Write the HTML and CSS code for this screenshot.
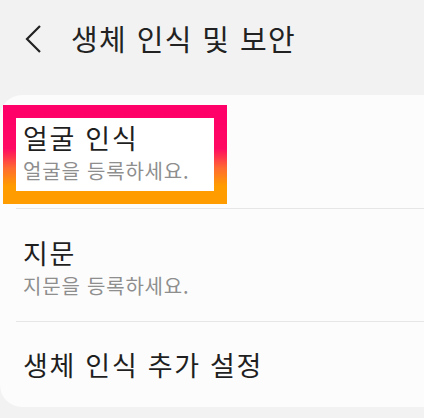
FILE: index.html
```html
<!DOCTYPE html>
<html lang="ko">
<head>
  <meta charset="UTF-8">
  <meta name="viewport" content="width=device-width, initial-scale=1.0">
  <title>생체 인식 및 보안</title>
  <link rel="stylesheet" href="styles.css">
</head>
<body>

<header class="top-bar">
  <svg class="back" width="16" height="28" viewBox="0 0 16 28">
    <path d="M15 1 L2 14 L15 27" fill="none" stroke="#222" stroke-width="2.2"/>
  </svg>
  <h1>생체 인식 및 보안</h1>
</header>

<section class="card">
  <div class="row row-face">
    <div class="highlight">
      <div class="title">얼굴 인식</div>
      <div class="sub">얼굴을 등록하세요.</div>
    </div>
  </div>

  <div class="row row-finger">
    <div class="title">지문</div>
    <div class="sub">지문을 등록하세요.</div>
  </div>

  <div class="row row-more">
    <div class="title">생체 인식 추가 설정</div>
  </div>
</section>

</body>
</html>
```

FILE: styles.css
```css
body {
  font-family: "Noto Sans CJK KR", "Noto Sans", sans-serif;
  background-color: #f2f2f2;
  margin: 0;
  width: 424px;
  height: 418px;
  overflow: hidden;
}

.top-bar {
  display: flex;
  align-items: center;
  height: 80px;
  padding: 0 0 15px 25px;
}

.back {
  display: block;
  margin-top: -2px;
}

h1 {
  margin: -3px 0 0 30px;
  font-size: 29px;
  font-weight: 400;
  color: #222;
  line-height: 1;
  letter-spacing: 1.4px;
}

.card {
  background-color: #fcfcfc;
  border-radius: 22px 0 0 22px;
  width: 440px;
}

.row {
  border-bottom: 1px solid #e6e6e6;
  margin-left: 16px;
}

.row:last-child {
  border-bottom: none;
}

.title {
  font-size: 27px;
  color: #1f1f1f;
  line-height: 34px;
  letter-spacing: 1.7px;
}

.sub {
  font-size: 20px;
  color: #8e8e8e;
  line-height: 26px;
  letter-spacing: 0.8px;
  margin-top: 3px;
}

.row-face {
  height: 113px;
  padding-top: 10px;
  box-sizing: border-box;
  margin-left: 0;
  padding-left: 3px;
  border-bottom: none;
}

.row-face + .row {
  border-top: 1px solid #e6e6e6;
}

.highlight {
  width: 191px;
  height: 71px;
  border: 13px solid;
  border-image: linear-gradient(#ff0068 0%, #ff0a62 42%, #ff6a30 68%, #ff9c00 92%) 1;
  padding: 2px 0 0 7px;
  box-sizing: content-box;
  background-color: #fff;
}

.highlight .title {
  margin-top: 1px;
}

.row-finger {
  height: 114px;
  padding: 27px 0 0 7px;
  box-sizing: border-box;
}

.row-more {
  height: 85px;
  display: flex;
  align-items: center;
  padding-left: 7px;
}
```
